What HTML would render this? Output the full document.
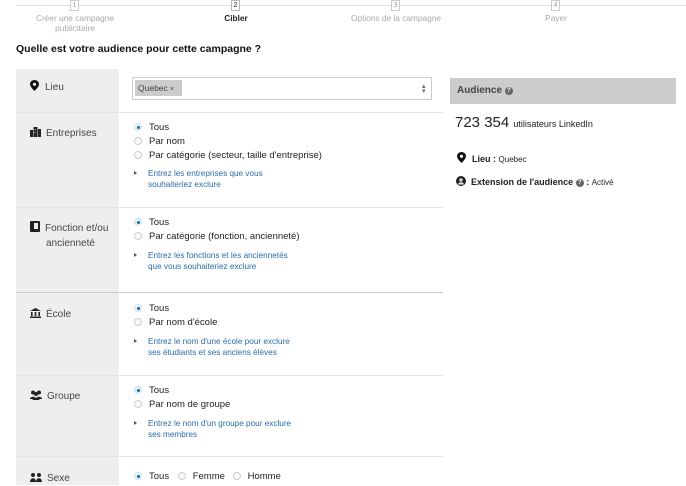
<!DOCTYPE html>
<html><head><meta charset="utf-8"><style>
*{margin:0;padding:0;box-sizing:border-box}
body{width:686px;height:485px;overflow:hidden;background:#fff;font-family:"Liberation Sans",Arial,sans-serif;color:#222;position:relative}
.a{position:absolute;white-space:nowrap}
.step{font-size:8.3px;color:#aaa;text-align:center;line-height:10px}
.num{position:absolute;width:9px;height:11px;border:1px solid #ccc;background:#fff;font-size:7px;color:#999;text-align:center;line-height:9px}
.gray{position:absolute;left:16px;width:103px;background:#eee}
.sep{position:absolute;left:16px;width:427px;height:1px;background:#e3e3e3}
.lbl{font-size:10px;color:#444;line-height:15px}
.r{font-size:9.5px;color:#222;line-height:14px}
.rb{display:inline-block;width:8px;height:8px;border-radius:50%;border:1px solid #ccc;background:#fafafa;vertical-align:-1px;margin-right:7px;position:relative}
.rb.on::after{content:"";position:absolute;left:1.5px;top:1.5px;width:3px;height:3px;border-radius:50%;background:#0a6bab}
.rb.on{border-color:#cfe0ee;background:#eef5fb}
.lk{font-size:8.2px;color:#2a6ca8;line-height:11px}
.lk::before{content:"";position:absolute;left:-14px;top:3px;border-left:3px solid #555;border-top:2px solid transparent;border-bottom:2px solid transparent}
svg.i{vertical-align:-1px;margin-right:5px}
.q{display:inline-block;width:8px;height:8px;border-radius:50%;background:#666;color:#fff;font-size:6px;line-height:8px;text-align:center;vertical-align:1px;font-weight:bold}
</style></head><body>
<div class="a" style="left:16px;top:5px;width:670px;height:1px;background:#ddd"></div>
<div class="num" style="left:70px;top:0">1</div>
<div class="num" style="left:231px;top:0;color:#222;border-color:#bbb">2</div>
<div class="num" style="left:391px;top:0">3</div>
<div class="num" style="left:551px;top:0">4</div>
<div class="a step" style="left:25px;top:13px;width:100px">Créer une campagne<br>publicitaire</div>
<div class="a step" style="left:186px;top:13px;width:100px;color:#222;font-weight:bold">Cibler</div>
<div class="a step" style="left:336px;top:13px;width:120px">Options de la campagne</div>
<div class="a step" style="left:506px;top:13px;width:100px">Payer</div>
<div class="a" style="left:16px;top:43px;font-size:10.5px;font-weight:bold;color:#111">Quelle est votre audience pour cette campagne ?</div>

<div class="gray" style="top:69px;height:416px"></div>
<div class="sep" style="top:112px"></div>
<div class="sep" style="top:207px"></div>
<div class="sep" style="top:292px;background:#ccc"></div>
<div class="sep" style="top:375px"></div>
<div class="sep" style="top:456px"></div>

<div class="a lbl" style="left:30px;top:80px"><svg width="9" height="11" viewBox="0 0 9 11" style="vertical-align:-1px;margin-right:6px"><path d="M4.5 0C2 0 0 2 0 4.3 0 7 4.5 11 4.5 11S9 7 9 4.3C9 2 7 0 4.5 0z" fill="#111"/><circle cx="4.5" cy="4.3" r="1.6" fill="#eee"/></svg>Lieu</div>
<div class="a" style="left:132px;top:77px;width:300px;height:23px;border:1px solid #ccc;background:#fff"></div>
<div class="a" style="left:135px;top:80px;width:47px;height:16px;background:#ccc;font-size:8.5px;color:#444;line-height:16px;padding-left:3px">Quebec <span style="font-size:7px">×</span></div>
<div class="a" style="left:422px;top:84px;font-size:7px;color:#666;line-height:5px">▴<br>▾</div>

<div class="a lbl" style="left:30px;top:126px"><svg class="i" width="11" height="10" viewBox="0 0 11 10"><rect x="0" y="3" width="3" height="7" fill="#222"/><rect x="3.5" y="0" width="4" height="10" fill="#222"/><rect x="8" y="2" width="3" height="8" fill="#222"/><rect x="4.5" y="2" width="1" height="1" fill="#eee"/><rect x="4.5" y="5" width="1" height="1" fill="#eee"/></svg>Entreprises</div>
<div class="a r" style="left:134px;top:121px"><span class="rb on"></span>Tous<br><span class="rb"></span>Par nom<br><span class="rb"></span>Par catégorie (secteur, taille d'entreprise)</div>
<div class="a lk" style="left:148px;top:168px">Entrez les entreprises que vous<br>souhaiteriez exclure</div>

<div class="a lbl" style="left:30px;top:221px;white-space:normal;width:85px"><svg class="i" width="10" height="11" viewBox="0 0 10 11"><rect x="0" y="0" width="10" height="11" rx="1" fill="#222"/><rect x="4" y="2" width="4" height="6" fill="#eee"/></svg>Fonction et/ou<br><span style="padding-left:16px">ancienneté</span></div>
<div class="a r" style="left:134px;top:216px"><span class="rb on"></span>Tous<br><span class="rb"></span>Par catégorie (fonction, ancienneté)</div>
<div class="a lk" style="left:148px;top:250px">Entrez les fonctions et les anciennetés<br>que vous souhaiteriez exclure</div>

<div class="a lbl" style="left:30px;top:307px"><svg class="i" width="11" height="10" viewBox="0 0 11 10"><path d="M5.5 0L0 3h11z" fill="#222"/><rect x="1" y="4" width="1.6" height="4" fill="#222"/><rect x="4.7" y="4" width="1.6" height="4" fill="#222"/><rect x="8.4" y="4" width="1.6" height="4" fill="#222"/><rect x="0" y="8.5" width="11" height="1.5" fill="#222"/></svg>École</div>
<div class="a r" style="left:134px;top:302px"><span class="rb on"></span>Tous<br><span class="rb"></span>Par nom d'école</div>
<div class="a lk" style="left:148px;top:336px">Entrez le nom d'une école pour exclure<br>ses étudiants et ses anciens élèves</div>

<div class="a lbl" style="left:30px;top:389px"><svg class="i" width="12" height="10" viewBox="0 0 12 10"><circle cx="3" cy="2.5" r="2" fill="#222"/><circle cx="9" cy="2.5" r="2" fill="#222"/><circle cx="6" cy="4" r="2" fill="#222"/><path d="M0 9c0-3 6-3 6 0M6 9c0-3 6-3 6 0M2.5 10c0-3 7-3 7 0z" fill="#222"/></svg>Groupe</div>
<div class="a r" style="left:134px;top:384px"><span class="rb on"></span>Tous<br><span class="rb"></span>Par nom de groupe</div>
<div class="a lk" style="left:148px;top:418px">Entrez le nom d'un groupe pour exclure<br>ses membres</div>

<div class="a lbl" style="left:30px;top:471px"><svg class="i" width="12" height="9" viewBox="0 0 12 9"><circle cx="3" cy="2" r="2" fill="#222"/><circle cx="9" cy="2" r="2" fill="#222"/><path d="M0 9c0-5 6-5 6 0zM6 9c0-5 6-5 6 0z" fill="#222"/></svg>Sexe</div>
<div class="a r" style="left:134px;top:470px"><span class="rb on"></span>Tous <span style="display:inline-block;width:6px"></span><span class="rb"></span>Femme <span style="display:inline-block;width:5px"></span><span class="rb"></span>Homme</div>

<div class="a" style="left:450px;top:78px;width:226px;height:26px;background:#ccc;font-size:10px;font-weight:bold;color:#444;line-height:26px;padding-left:7px">Audience <span class="q">?</span></div>
<div class="a" style="left:455px;top:114px;font-size:15px;color:#222">723 354 <span style="font-size:9px">utilisateurs LinkedIn</span></div>
<div class="a" style="left:457px;top:152px;font-size:9px;color:#222"><svg width="9" height="11" viewBox="0 0 9 11" style="vertical-align:-1px;margin-right:6px"><path d="M4.5 0C2 0 0 2 0 4.3 0 7 4.5 11 4.5 11S9 7 9 4.3C9 2 7 0 4.5 0z" fill="#111"/><circle cx="4.5" cy="4.3" r="1.6" fill="#fff"/></svg><b>Lieu :</b> <span style="font-size:8px">Quebec</span></div>
<div class="a" style="left:456px;top:176px;font-size:9px;color:#222"><svg width="10" height="10" viewBox="0 0 10 10" style="vertical-align:-1px;margin-right:5px"><circle cx="5" cy="5" r="5" fill="#222"/><circle cx="5" cy="4" r="1.7" fill="#ddd"/><path d="M2 8.5c0-3 6-3 6 0z" fill="#ddd"/></svg><b>Extension de l'audience</b> <span class="q">?</span> <b>:</b> <span style="font-size:8px">Activé</span></div>
</body></html>
